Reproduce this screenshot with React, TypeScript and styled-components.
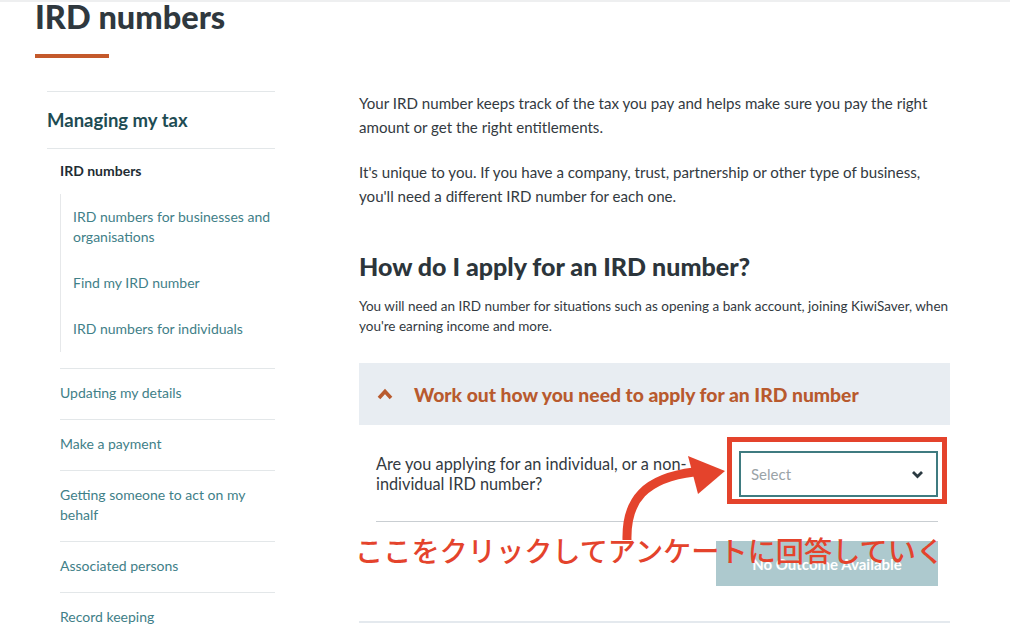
import React from 'react';
import styled, { createGlobalStyle } from 'styled-components';

const GlobalStyle = createGlobalStyle`
    html, body {
        margin: 0;
        padding: 0;
        background: #ffffff;
    }
    body {
        font-family: Lato, "Liberation Sans", Arial, sans-serif;
        color: #333a3f;
    }
`;

const sideItems = [
    ['Updating my details'],
    ['Make a payment'],
    ['Getting someone to act on my', 'behalf'],
    ['Associated persons'],
    ['Record keeping'],
];

const subItems = [
    'IRD numbers for businesses and organisations',
    'Find my IRD number',
    'IRD numbers for individuals',
];

const App = () => {
    return (
        <Page>
            <GlobalStyle />
            <TopRule />
            <Header>
                <Title>IRD numbers</Title>
                <Accent />
            </Header>

            <Columns>
                <Sidebar>
                    <SideHeading>Managing my tax</SideHeading>
                    <SideNav>
                        <SideGroup>
                            <ActiveLink>IRD numbers</ActiveLink>
                            <SubList>
                                {subItems.map((s) => (
                                    <SubLink key={s}>{s}</SubLink>
                                ))}
                            </SubList>
                        </SideGroup>
                        {sideItems.map((lines) => (
                            <SideLink key={lines[0]}>
                                {lines.map((l, i) => (
                                    <React.Fragment key={l}>
                                        {i > 0 && <br />}
                                        {l}
                                    </React.Fragment>
                                ))}
                            </SideLink>
                        ))}
                    </SideNav>
                </Sidebar>

                <Main>
                    <Para>
                        Your IRD number keeps track of the tax you pay and helps make sure you pay the right
                        amount or get the right entitlements.
                    </Para>
                    <Para>
                        It's unique to you. If you have a company, trust, partnership or other type of business,
                        you'll need a different IRD number for each one.
                    </Para>

                    <SectionTitle>How do I apply for an IRD number?</SectionTitle>
                    <SmallPara>
                        You will need an IRD number for situations such as opening a bank account, joining KiwiSaver, when
                        you're earning income and more.
                    </SmallPara>

                    <Accordion>
                        <AccHeader>
                            <svg width="16" height="12" viewBox="0 0 16 12">
                                <path d="M2 10 L8 3.5 L14 10" fill="none" stroke="#b85a2e" strokeWidth="3.6" strokeLinejoin="miter" />
                            </svg>
                            <AccTitle>Work out how you need to apply for an IRD number</AccTitle>
                        </AccHeader>
                        <AccBody>
                            <QuestionRow>
                                <Question>Are you applying for an individual, or a non-individual IRD number?</Question>
                                <SelectWrap>
                                    <SelectBox>
                                        <span>Select</span>
                                        <svg width="13" height="9" viewBox="0 0 13 9">
                                            <path d="M2 2 L6.5 6.5 L11 2" fill="none" stroke="#2b3a42" strokeWidth="2.8" />
                                        </svg>
                                    </SelectBox>
                                    <Highlight />
                                </SelectWrap>
                            </QuestionRow>
                            <ButtonRow>
                                <OutcomeButton>No Outcome Available</OutcomeButton>
                            </ButtonRow>
                        </AccBody>
                    </Accordion>
                </Main>
            </Columns>

            <ArrowMark width="140" height="100" viewBox="600 440 140 100">
                <path d="M627 540 C 626 500, 645 478, 694 472" fill="none" stroke="#e4432c" strokeWidth="9" />
                <polygon points="688,456 725,471 698,494" fill="#e4432c" />
            </ArrowMark>
            <Note>ここをクリックしてアンケートに回答していく</Note>
        </Page>
    );
};

export default App;

// stylesheet

const Page = styled.div`
    position: relative;
    width: 1024px;
    height: 643px;
    overflow: hidden;
`;

const TopRule = styled.div`
    height: 2px;
    width: 1010px;
    background: #eeeff0;
`;

const Header = styled.header`
    padding-left: 35px;
`;

const Title = styled.h1`
    margin: 0;
    font-family: Lato, "Liberation Sans", sans-serif;
    font-size: 32.5px;
    line-height: 30px;
    font-weight: 900;
    color: #2f383e;
`;

const Accent = styled.div`
    width: 74px;
    height: 3.5px;
    margin-top: 22px;
    background: #c4592b;
`;

const Columns = styled.div`
    display: flex;
    gap: 84px;
    margin-top: 33.5px;
    padding-left: 47px;
`;

const Sidebar = styled.nav`
    width: 228px;
    flex-shrink: 0;
`;

const SideHeading = styled.div`
    border-top: 1px solid #e3e7e9;
    border-bottom: 1px solid #e3e7e9;
    padding: 17px 0 17px;
    font-size: 18.5px;
    line-height: 22px;
    font-weight: 700;
    color: #1e4c53;
`;

const SideNav = styled.div`
    margin-left: 13px;
`;

const SideGroup = styled.div`
    padding: 12px 0 16px;
`;

const ActiveLink = styled.div`
    font-size: 14px;
    line-height: 20px;
    font-weight: 700;
    color: #1f2d34;
`;

const SubList = styled.div`
    margin-top: 13px;
    border-left: 1px solid #e6e8ea;
    padding-left: 12px;
`;

const SubLink = styled.div`
    padding: 13px 0;
    font-size: 14px;
    line-height: 20px;
    color: #3f8088;
`;

const SideLink = styled.div`
    border-top: 1px solid #e3e7e9;
    padding: 14px 0 16px;
    font-size: 14px;
    line-height: 20px;
    color: #3f8088;
`;

const Main = styled.main`
    width: 591px;
    flex-shrink: 0;
`;

const Para = styled.p`
    margin: 0 0 21px;
    font-size: 15.1px;
    line-height: 24px;
    color: #333a3f;
`;

const SectionTitle = styled.h2`
    margin: 43px 0 0;
    font-size: 25px;
    line-height: 30px;
    font-weight: 900;
    color: #2c353b;
`;

const SmallPara = styled.p`
    margin: 15px 0 0;
    font-size: 13.5px;
    line-height: 20px;
    color: #333a3f;
`;

const Accordion = styled.section`
    margin-top: 27px;
    border-bottom: 2px solid #e4e9ee;
`;

const AccHeader = styled.div`
    display: flex;
    align-items: center;
    gap: 21px;
    height: 62px;
    padding-left: 18px;
    background: #e8edf2;
`;

const AccTitle = styled.div`
    font-size: 19.3px;
    font-weight: 900;
    color: #b85a2e;
`;

const AccBody = styled.div`
    padding: 0 12px 0 17px;
`;

const QuestionRow = styled.div`
    display: flex;
    justify-content: space-between;
    align-items: center;
    padding: 26px 0 24px;
    border-bottom: 1px solid #c9ced2;
`;

const Question = styled.div`
    width: 330px;
    font-size: 16.3px;
    line-height: 20px;
    color: #333a3f;
`;

const SelectWrap = styled.div`
    position: relative;
`;

const SelectBox = styled.div`
    display: flex;
    align-items: center;
    justify-content: space-between;
    box-sizing: border-box;
    width: 199px;
    height: 46px;
    padding: 0 12px 0 10px;
    border: 2px solid #3f7b80;
    font-size: 15px;
    color: #9aa3a7;
`;

const Highlight = styled.span`
    position: absolute;
    left: -12px;
    right: -9px;
    top: -14px;
    bottom: -7px;
    border: 5px solid #e4432c;
    pointer-events: none;
`;

const ButtonRow = styled.div`
    display: flex;
    justify-content: flex-end;
    padding: 19px 0 35px;
`;

const OutcomeButton = styled.div`
    width: 222px;
    height: 45px;
    display: flex;
    align-items: center;
    justify-content: center;
    background: #adc9ce;
    color: #ffffff;
    font-size: 15px;
    font-weight: 700;
`;

const ArrowMark = styled.svg`
    position: absolute;
    left: 600px;
    top: 440px;
    pointer-events: none;
`;

const Note = styled.div`
    position: absolute;
    left: 355px;
    top: 533px;
    font-family: "Noto Sans CJK JP", sans-serif;
    font-size: 28.2px;
    line-height: 34px;
    font-weight: 500;
    color: #e4432c;
    white-space: nowrap;
`;
